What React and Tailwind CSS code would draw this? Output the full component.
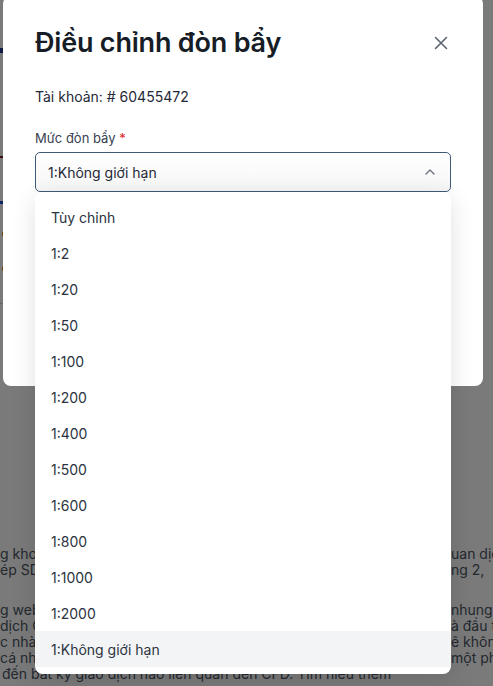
import React from "react";

const options = [
  "Tùy chỉnh",
  "1:2",
  "1:20",
  "1:50",
  "1:100",
  "1:200",
  "1:400",
  "1:500",
  "1:600",
  "1:800",
  "1:1000",
  "1:2000",
  "1:Không giới hạn",
];

const bgLines1 = [
  ["g khoá", "uan dịc"],
  ["ép SD", "ng 2,"],
];
const bgLines2 = [
  ["g web", "nhung: C"],
  ["dịch C", "à đầu tư"],
  ["c nhà", "ẽ không"],
  ["cá nhâ", "một phầ"],
];

function BgLine({ left, right }) {
  return (
    <div className="flex h-[16px] whitespace-nowrap">
      <span className="w-[451px] shrink-0">{left}</span>
      <span>{right}</span>
    </div>
  );
}

export default function App() {
  return (
    <div
      className="relative w-[493px] h-[686px] overflow-hidden bg-white"
      style={{ fontFamily: "Inter, 'Noto Sans', sans-serif" }}
    >
      {/* background page */}
      <div className="flex flex-col text-[14px] leading-[16px] text-[#4b5563]">
        <div className="flex flex-col items-start pt-[48px]">
          <div className="w-[3px] h-[5px] bg-[#1e3a8a]" />
          <div className="mt-[103px] w-[4px] h-[2px] bg-[#7f1d1d]" />
          <div className="mt-[43px] w-[3px] h-[3px] bg-[#1d4ed8]" />
          <div className="mt-[28px] ml-[2px] w-[2px] h-[4px] bg-[#f59e0b]" />
          <div className="mt-[31px] ml-[2px] w-[2px] h-[4px] bg-[#f59e0b]" />
          <div className="mt-[32px] w-[8px] h-px bg-[#d1d5db]" />
        </div>
        <div className="mt-[242px] flex flex-col">
          {bgLines1.map(([l, r], i) => (
            <BgLine key={i} left={l} right={r} />
          ))}
        </div>
        <div className="mt-[24px] flex flex-col">
          {bgLines2.map(([l, r], i) => (
            <BgLine key={i} left={l} right={r} />
          ))}
          <div className="h-[16px] whitespace-nowrap pl-[2px]">
            đến bất kỳ giao dịch nào liên quan đến CFD. Tìm hiểu thêm
          </div>
        </div>
      </div>

      {/* overlay */}
      <div className="absolute inset-0 bg-black/[0.52]" />

      {/* modal */}
      <div className="absolute left-[3px] top-[-4px] w-[480px] h-[390px] rounded-lg bg-white px-[32px] pt-[29px]">
        <div className="flex items-center justify-between">
          <h1 className="text-[27px] leading-[36px] font-semibold text-[#161d26] tracking-[-0.2px]">
            Điều chỉnh đòn bẩy
          </h1>
          <button className="mr-[-2px] flex h-[24px] w-[24px] items-center justify-center text-[#5b6470]">
            <svg width="16" height="16" viewBox="0 0 16 16" fill="none">
              <path
                d="M2.5 2.5L13.5 13.5M13.5 2.5L2.5 13.5"
                stroke="currentColor"
                strokeWidth="1.6"
                strokeLinecap="round"
              />
            </svg>
          </button>
        </div>

        <div className="mt-[26px] text-[14px] leading-[20px] text-[#1f2937]">
          Tài khoản: # 60455472
        </div>

        <div className="mt-[22px] text-[13px] leading-[18px] text-[#374151]">
          Mức đòn bẩy <span className="text-[#dc2626]">*</span>
        </div>

        <div className="relative mt-[5px]">
          <div className="flex h-[40px] items-center justify-between rounded-[5px] border border-[#3f5a75] bg-gradient-to-b from-white to-[#f6f6f6] pl-[12px] pr-[14px]">
            <span className="text-[14px] text-[#1f2937]">1:Không giới hạn</span>
            <svg width="12" height="8" viewBox="0 0 12 8" fill="none" className="text-[#6b7280]">
              <path
                d="M2 6L6 2L10 6"
                stroke="currentColor"
                strokeWidth="1.4"
                strokeLinecap="round"
                strokeLinejoin="round"
              />
            </svg>
          </div>

          <div className="absolute left-0 right-0 top-[40px] rounded-lg bg-white py-[7px] shadow-[0_6px_24px_rgba(0,0,0,0.12)]">
            {options.map((o, i) => (
              <div
                key={o}
                className={
                  "flex h-[36px] items-center px-[16px] text-[14px] text-[#2b3340] " +
                  (i === options.length - 1 ? "bg-[#f3f4f6]" : "")
                }
              >
                {o}
              </div>
            ))}
          </div>
        </div>
      </div>
    </div>
  );
}
